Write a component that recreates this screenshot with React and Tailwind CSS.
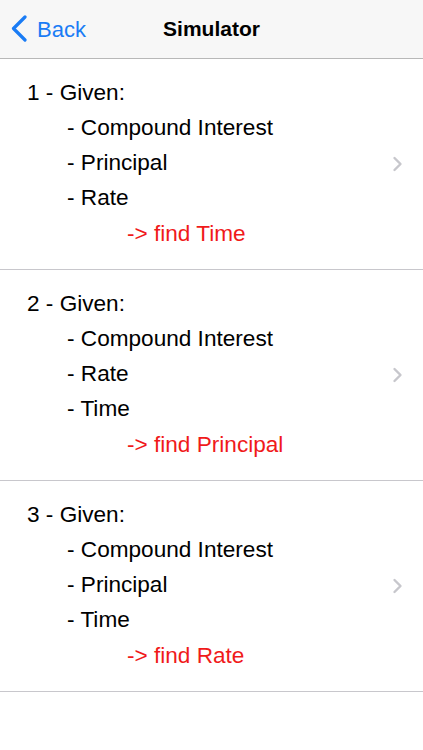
const items = [
  { n: 1, given: ["Compound Interest", "Principal", "Rate"], find: "Time" },
  { n: 2, given: ["Compound Interest", "Rate", "Time"], find: "Principal" },
  { n: 3, given: ["Compound Interest", "Principal", "Time"], find: "Rate" },
];

function Chevron() {
  return (
    <svg width="12" height="16" viewBox="0 0 12 16" fill="none">
      <path d="M2.5 2 L8.5 8 L2.5 14" stroke="#c7c7cc" strokeWidth="2.4" strokeLinecap="round" strokeLinejoin="round" />
    </svg>
  );
}

function Cell({ item }) {
  return (
    <div className="flex items-center pl-[20px] border-b border-[#c8c7cc]">
      <div className="flex-1 pt-[16px] pb-[18px] pl-[7px]">
        <div className="leading-[35px]">{item.n} - Given:</div>
        {item.given.map((g) => (
          <div key={g} className="leading-[35px] pl-[40px]">
            - {g}
          </div>
        ))}
        <div className="leading-[35px] pl-[100px] mt-[1px] text-[#f01a1a]">
          -&gt; find {item.find}
        </div>
      </div>
      <div className="pr-[19px]">
        <Chevron />
      </div>
    </div>
  );
}

export default function App() {
  return (
    <div
      className="w-[423px] h-[750px] bg-white text-black"
      style={{ fontFamily: '"Liberation Sans", Arial, sans-serif' }}
    >
      {/* Nav bar */}
      <div className="relative h-[59px] bg-[#f7f7f7] border-b border-[#b8b8b8] flex items-center">
        <div className="flex items-center pl-[11px] text-[#1a7cf5]">
          <svg width="16" height="28" viewBox="0 0 16 28" fill="none">
            <path d="M14 2 L2.5 13.5 L14 25" stroke="#1a7cf5" strokeWidth="3.2" strokeLinecap="round" strokeLinejoin="round" />
          </svg>
          <span className="ml-[10px] text-[22px]">Back</span>
        </div>
        <div className="absolute inset-0 flex items-center justify-center pointer-events-none">
          <span className="text-[21px] font-bold">Simulator</span>
        </div>
      </div>

      <div className="text-[22.6px]">
        {items.map((it) => (
          <Cell key={it.n} item={it} />
        ))}
      </div>
    </div>
  );
}
